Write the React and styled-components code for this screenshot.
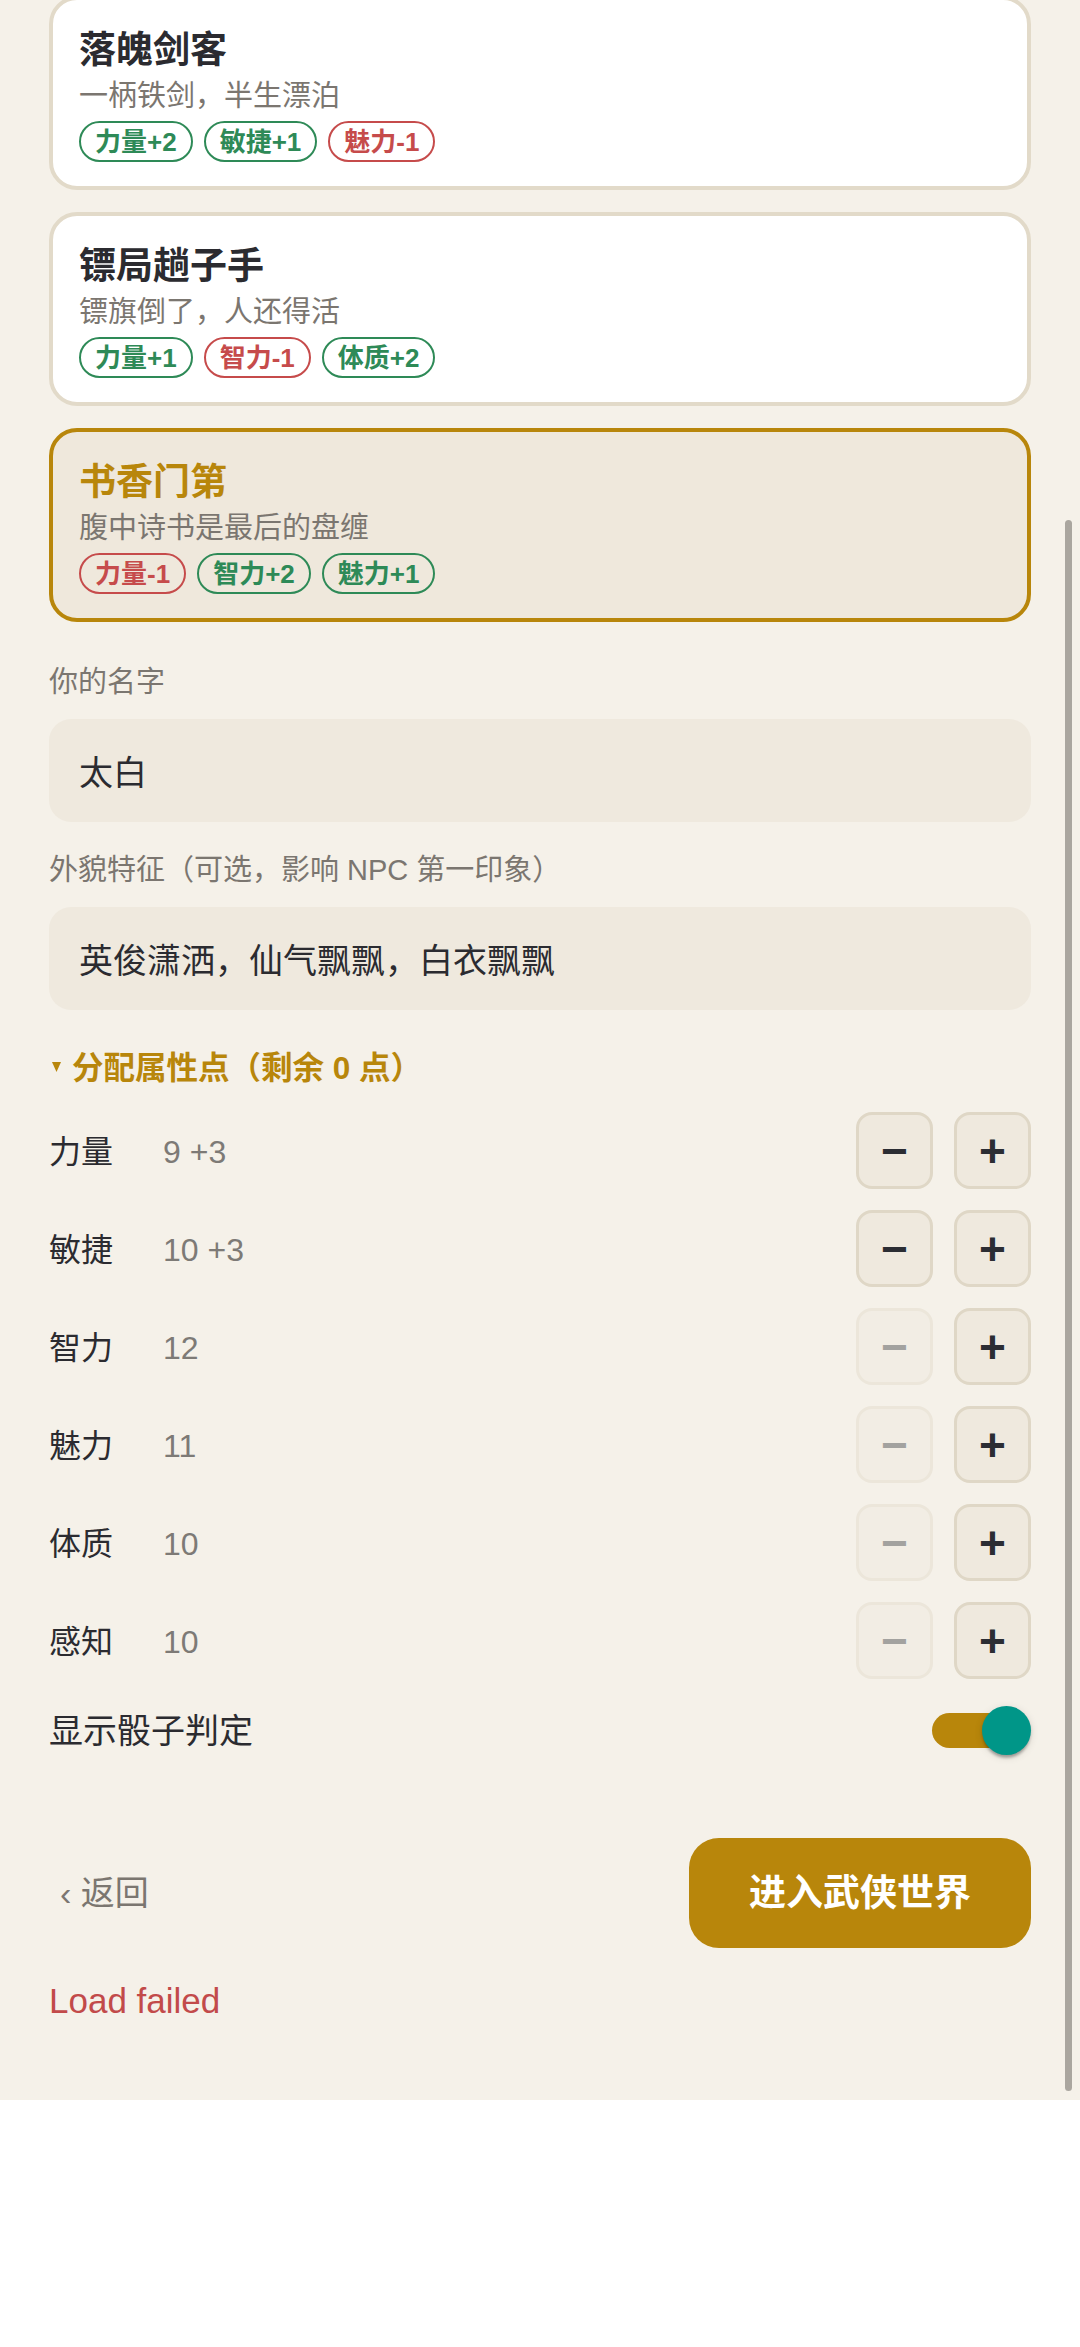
import React from "react";
import styled, { createGlobalStyle } from "styled-components";

const FONT = `"Liberation Sans", "Noto Sans CJK SC", sans-serif`;

const GlobalStyle = createGlobalStyle`
  html, body { margin: 0; padding: 0; background: #ffffff; }
  body { font-family: ${FONT}; -webkit-font-smoothing: antialiased; }
  * { box-sizing: border-box; }
`;

const Page = styled.div`
  position: relative;
  display: flow-root;
  background: #f5f1e9;
  padding: 0 49px 75px;
  color: #2b2b30;
  font-family: ${FONT};
`;

const OriginList = styled.div`
  display: flex;
  flex-direction: column;
  gap: 22px;
  margin-top: -4px;
`;

const OriginCard = styled.div`
  height: 194px;
  border: 4px solid ${(p) => (p.$selected ? "#b8860b" : "#e2dac9")};
  background: ${(p) => (p.$selected ? "#efe8dc" : "#ffffff")};
  border-radius: 28px;
  padding: 26px 26px 0;
`;

const CardTitle = styled.div`
  font-size: 37px;
  line-height: 50px;
  font-weight: 700;
  color: ${(p) => (p.$selected ? "#b8860b" : "#2b2b30")};
`;

const CardSubtitle = styled.div`
  font-size: 29px;
  line-height: 40px;
  color: #7b7670;
`;

const TagRow = styled.div`
  display: flex;
  gap: 11px;
  margin-top: 5px;
`;

const Tag = styled.span`
  display: inline-flex;
  align-items: center;
  height: 41px;
  padding: 0 14px;
  border: 2px solid currentColor;
  border-radius: 999px;
  font-size: 26px;
  line-height: 1;
  font-weight: 600;
  color: ${(p) => (p.$tone === "down" ? "#c64b4b" : "#2e8a57")};
`;

const Field = styled.div`
  margin-top: ${(p) => p.$gap}px;
`;

const FieldLabel = styled.div`
  font-size: 29px;
  line-height: 40px;
  color: #7b7670;
`;

const TextInput = styled.input`
  display: block;
  width: 100%;
  height: 103px;
  margin: 17px 0 0;
  border: none;
  outline: none;
  border-radius: 22px;
  background: #efe9de;
  padding: 0 30px;
  font: 400 34px/48px ${FONT};
  color: #2b2b30;
`;

const SectionToggle = styled.div`
  margin-top: 33px;
  display: flex;
  align-items: center;
  height: 44px;
  color: #b8860b;
  font-size: 31.5px;
  font-weight: 700;
`;

const Caret = styled.svg`
  width: 9px;
  height: 10px;
  margin: 3px 11px 0 3px;
  flex: none;
`;

const StatList = styled.div`
  margin-top: 25px;
  display: flex;
  flex-direction: column;
  gap: 21px;
`;

const StatRow = styled.div`
  display: flex;
  align-items: center;
  height: 77px;
  padding-top: 3px;
`;

const StatName = styled.span`
  width: 114px;
  font-size: 32px;
  line-height: 44px;
  color: #2b2b30;
`;

const StatValue = styled.span`
  flex: 1;
  font-size: 32px;
  line-height: 44px;
  color: #7d7a76;
`;

const StepGroup = styled.div`
  display: flex;
  gap: 21px;
  margin-top: -3px;
`;

const StepButton = styled.button`
  width: 77px;
  height: 77px;
  padding: 0;
  border-radius: 16px;
  border: 3px solid #dfd7c6;
  background: #efe9de;
  color: #2b2d33;
  font: 700 46px/1 ${FONT};
  display: flex;
  align-items: center;
  justify-content: center;
  opacity: ${(p) => (p.disabled ? 0.4 : 1)};
`;

const ToggleRow = styled.div`
  margin-top: 27px;
  display: flex;
  align-items: center;
  justify-content: space-between;
  height: 49px;
`;

const ToggleLabel = styled.span`
  font-size: 34px;
  line-height: 48px;
  color: #2b2b30;
`;

const Switch = styled.div`
  position: relative;
  width: 99px;
  height: 49px;
  display: flex;
  align-items: center;
`;

const SwitchTrack = styled.div`
  width: 85px;
  height: 35px;
  border-radius: 18px;
  background: #b8860b;
`;

const SwitchThumb = styled.div`
  position: absolute;
  right: 0;
  top: 0;
  width: 49px;
  height: 49px;
  border-radius: 50%;
  background: #009688;
  box-shadow: 0 5px 3px -2px rgba(0, 0, 0, 0.2), 0 2px 3px rgba(0, 0, 0, 0.14),
    0 2px 8px rgba(0, 0, 0, 0.12);
`;

const Actions = styled.div`
  margin-top: 83px;
  display: flex;
  align-items: center;
  justify-content: space-between;
`;

const BackButton = styled.button`
  background: none;
  border: none;
  padding: 0 10px 0 11px;
  font: 400 34px/48px ${FONT};
  color: #7b7670;
`;

const EnterButton = styled.button`
  width: 342px;
  height: 110px;
  border: none;
  border-radius: 30px;
  background: #b8860b;
  color: #ffffff;
  font: 700 37px/1 ${FONT};
`;

const ErrorText = styled.div`
  margin-top: 29px;
  font-size: 35px;
  line-height: 48px;
  color: #c24a4a;
`;

const ScrollThumb = styled.div`
  position: absolute;
  top: 520px;
  right: 8px;
  width: 7px;
  height: 1571px;
  border-radius: 4px;
  background: #aaa69f;
`;

const origins = [
  {
    title: "落魄剑客",
    motto: "一柄铁剑，半生漂泊",
    tags: [
      ["力量+2", "up"],
      ["敏捷+1", "up"],
      ["魅力-1", "down"],
    ],
  },
  {
    title: "镖局趟子手",
    motto: "镖旗倒了，人还得活",
    tags: [
      ["力量+1", "up"],
      ["智力-1", "down"],
      ["体质+2", "up"],
    ],
  },
  {
    title: "书香门第",
    motto: "腹中诗书是最后的盘缠",
    selected: true,
    tags: [
      ["力量-1", "down"],
      ["智力+2", "up"],
      ["魅力+1", "up"],
    ],
  },
];

const stats = [
  { name: "力量", value: "9 +3", canLower: true },
  { name: "敏捷", value: "10 +3", canLower: true },
  { name: "智力", value: "12", canLower: false },
  { name: "魅力", value: "11", canLower: false },
  { name: "体质", value: "10", canLower: false },
  { name: "感知", value: "10", canLower: false },
];

export default function App() {
  return (
    <>
      <GlobalStyle />
      <Page>
        <OriginList>
          {origins.map((o) => (
            <OriginCard key={o.title} $selected={o.selected}>
              <CardTitle $selected={o.selected}>{o.title}</CardTitle>
              <CardSubtitle>{o.motto}</CardSubtitle>
              <TagRow>
                {o.tags.map(([label, tone]) => (
                  <Tag key={label} $tone={tone}>
                    {label}
                  </Tag>
                ))}
              </TagRow>
            </OriginCard>
          ))}
        </OriginList>

        <Field $gap={40}>
          <FieldLabel>你的名字</FieldLabel>
          <TextInput defaultValue="太白" />
        </Field>

        <Field $gap={28}>
          <FieldLabel>外貌特征（可选，影响 NPC 第一印象）</FieldLabel>
          <TextInput defaultValue="英俊潇洒，仙气飘飘，白衣飘飘" />
        </Field>

        <SectionToggle>
          <Caret viewBox="0 0 9 10">
            <polygon points="0,0 9,0 4.5,10" fill="#b8860b" />
          </Caret>
          分配属性点（剩余 0 点）
        </SectionToggle>

        <StatList>
          {stats.map((s) => (
            <StatRow key={s.name}>
              <StatName>{s.name}</StatName>
              <StatValue>{s.value}</StatValue>
              <StepGroup>
                <StepButton disabled={!s.canLower}>−</StepButton>
                <StepButton>+</StepButton>
              </StepGroup>
            </StatRow>
          ))}
        </StatList>

        <ToggleRow>
          <ToggleLabel>显示骰子判定</ToggleLabel>
          <Switch>
            <SwitchTrack />
            <SwitchThumb />
          </Switch>
        </ToggleRow>

        <Actions>
          <BackButton>‹ 返回</BackButton>
          <EnterButton>进入武侠世界</EnterButton>
        </Actions>

        <ErrorText>Load failed</ErrorText>

        <ScrollThumb />
      </Page>
    </>
  );
}
